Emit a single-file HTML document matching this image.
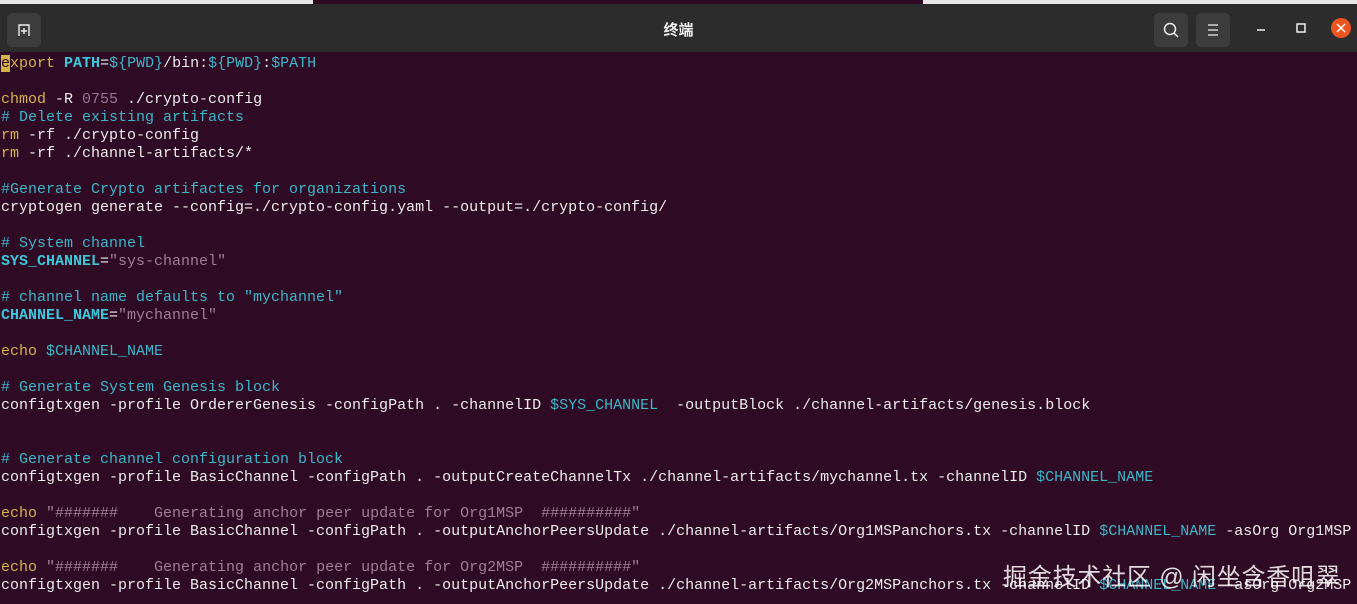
<!DOCTYPE html>
<html><head><meta charset="utf-8"><style>
body{margin:0;width:1357px;height:604px;overflow:hidden;background:#2f0a24;font-family:"Liberation Sans","Noto Sans CJK SC",sans-serif}
.top{position:absolute;left:0;top:0;width:1357px;height:5px;background:#e6e6e6}
.top2{position:absolute;left:313px;top:0;width:610px;height:5px;background:#2f0a24}
.bar{position:absolute;left:0;top:4px;width:1357px;height:48px;background:#2c2c2c}
.btn{position:absolute;top:9px;width:34px;height:34px;background:#3c3c3c;border-radius:5px}
.title{position:absolute;left:0;width:1357px;top:19px;text-align:center;color:#f0f0f0;font-size:15px;font-weight:bold}
pre{position:absolute;left:1px;top:55px;margin:0;font-family:"Liberation Mono",monospace;font-size:15px;line-height:18px;color:#ececec}
.y{color:#d4b34a}.c{color:#3bb7c8}.b{color:#3cc8d8;font-weight:bold}.s{color:#a07f93}.n{color:#9a7497}.v{color:#3bb7c8}
.cur{background:#d4b34a;color:#2f0a24}
.wm{position:absolute;left:1003px;top:557px;color:rgba(255,255,255,.85);font-size:24px;letter-spacing:0.8px}
</style></head><body>
<div class="top"></div><div class="top2"></div>
<div class="bar">
<div class="btn" style="left:7px"><svg width="34" height="34"><path d="M12 23V12h10v11M17 15v6M14 18h6" stroke="#eee" stroke-width="1.4" fill="none"/></svg></div>
<div class="title" style="top:15px">终端</div>
<div class="btn" style="left:1154px"><svg width="34" height="34"><circle cx="16" cy="16" r="5.5" stroke="#eee" stroke-width="1.5" fill="none"/><path d="M20 20l4 4" stroke="#eee" stroke-width="1.5"/></svg></div>
<div class="btn" style="left:1196px"><svg width="34" height="34"><path d="M12 12h10M12 17h10M12 22h10" stroke="#eee" stroke-width="1.3"/></svg></div>
<svg style="position:absolute;left:1250px;top:0" width="107" height="48"><path d="M7 26h8" stroke="#eee" stroke-width="1.5"/><rect x="47" y="20" width="8" height="8" stroke="#eee" stroke-width="1.5" fill="none"/><circle cx="91" cy="24" r="10" fill="#e95420"/><path d="M87 20l8 8M95 20l-8 8" stroke="#fff" stroke-width="1.5"/></svg>
</div>
<pre><span class="cur">e</span><span class="y">xport</span> <span class="b">PATH</span>=<span class="c">${PWD}</span>/bin:<span class="c">${PWD}</span>:<span class="c">$PATH</span>

<span class="y">chmod</span> -R <span class="n">0755</span> ./crypto-config
<span class="c"># Delete existing artifacts</span>
<span class="y">rm</span> -rf ./crypto-config
<span class="y">rm</span> -rf ./channel-artifacts/*

<span class="c">#Generate Crypto artifactes for organizations</span>
cryptogen generate --config=./crypto-config.yaml --output=./crypto-config/

<span class="c"># System channel</span>
<span class="b">SYS_CHANNEL</span>=<span class="s">"sys-channel"</span>

<span class="c"># channel name defaults to "mychannel"</span>
<span class="b">CHANNEL_NAME</span>=<span class="s">"mychannel"</span>

<span class="y">echo</span> <span class="v">$CHANNEL_NAME</span>

<span class="c"># Generate System Genesis block</span>
configtxgen -profile OrdererGenesis -configPath . -channelID <span class="v">$SYS_CHANNEL</span>  -outputBlock ./channel-artifacts/genesis.block


<span class="c"># Generate channel configuration block</span>
configtxgen -profile BasicChannel -configPath . -outputCreateChannelTx ./channel-artifacts/mychannel.tx -channelID <span class="v">$CHANNEL_NAME</span>

<span class="y">echo</span> <span class="s">"#######    Generating anchor peer update for Org1MSP  ##########"</span>
configtxgen -profile BasicChannel -configPath . -outputAnchorPeersUpdate ./channel-artifacts/Org1MSPanchors.tx -channelID <span class="v">$CHANNEL_NAME</span> -asOrg Org1MSP

<span class="y">echo</span> <span class="s">"#######    Generating anchor peer update for Org2MSP  ##########"</span>
configtxgen -profile BasicChannel -configPath . -outputAnchorPeersUpdate ./channel-artifacts/Org2MSPanchors.tx -channelID <span class="v">$CHANNEL_NAME</span> -asOrg Org2MSP</pre>
<div class="wm">掘金技术社区 @ 闲坐含香咀翠</div>
</body></html>
